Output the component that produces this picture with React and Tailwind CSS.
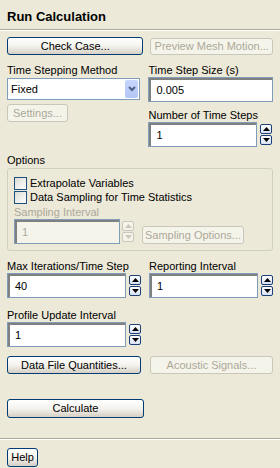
import React from 'react';

const font = "font-['Liberation_Sans',Arial,sans-serif]";

const Button = ({ children, disabled, className = '' }) => (
  <button
    type="button"
    disabled={disabled}
    className={`flex items-center justify-center rounded-[3px] border text-[11px] leading-none ${
      disabled
        ? 'border-[#C9C7BA] bg-[#F5F4EA] text-[#ACA899]'
        : 'border-[#003C74] bg-gradient-to-b from-white via-[#F4F3EE] to-[#D6D0C5] text-black'
    } ${className}`}
  >
    {children}
  </button>
);

const Spin = ({ disabled }) => {
  const box = disabled
    ? 'border-[#C9C7BA] bg-[#F5F4EA]'
    : 'border-[#1C3F7A] bg-gradient-to-b from-white to-[#D8E2F5]';
  const fill = disabled ? '#C9C7BA' : '#000';
  return (
    <div className="flex flex-col gap-[1px]">
      <div className={`flex h-[10px] w-[12px] items-center justify-center rounded-[2px] border ${box}`}>
        <svg width="7" height="4" viewBox="0 0 7 4"><path d="M0 4 L3.5 0 L7 4 Z" fill={fill} /></svg>
      </div>
      <div className={`flex h-[10px] w-[12px] items-center justify-center rounded-[2px] border ${box}`}>
        <svg width="7" height="4" viewBox="0 0 7 4"><path d="M0 0 L3.5 4 L7 0 Z" fill={fill} /></svg>
      </div>
    </div>
  );
};

const Field = ({ value, disabled, className = '' }) => (
  <div
    className={`flex h-[25px] items-center border border-[#7F9DB9] ${disabled ? 'bg-[#F5F4EA] text-[#ACA899]' : 'bg-white text-black'} ${className}`}
  >
    <div className="flex h-full w-full items-center border-l-2 border-t-2 border-[#808080] pl-[5px] text-[11px]">
      {value}
    </div>
  </div>
);

const Label = ({ children, className = '' }) => (
  <div className={`h-[14px] text-[11px] leading-[14px] ${className}`}>{children}</div>
);

const Check = ({ label }) => (
  <div className="flex h-[14px] items-center gap-[3px]">
    <div className="h-[13px] w-[13px] border border-[#1C5180] bg-gradient-to-br from-[#DCDBD5] to-white" />
    <span className="text-[11px] leading-none">{label}</span>
  </div>
);

const App = () => {
  return (
    <div className={`h-[468px] w-[280px] overflow-hidden bg-[#ECE9D8] text-black ${font}`}>
      <div className="h-[29px] px-[7px] pt-[9px] text-[13px] font-bold leading-[16px]">Run Calculation</div>
      <div className="border-t border-b border-t-[#ACA899] border-b-white" />

      <div className="px-[7px]">
        <div className="mt-[6px] flex gap-[7px]">
          <Button className="h-[18px] w-[137px]">Check Case...</Button>
          <Button disabled className="mt-[1px] h-[17px] w-[123px]">Preview Mesh Motion...</Button>
        </div>

        <div className="mt-[8px] flex gap-[8px]">
          <div className="w-[134px]">
            <Label>Time Stepping Method</Label>
            <div className="mt-[1px] flex h-[22px] items-center border border-[#7F9DB9] bg-white pl-[3px] pr-[1px]">
              <span className="flex-1 text-[11px]">Fixed</span>
              <div className="flex h-[18px] w-[13px] items-center justify-center rounded-[2px] bg-gradient-to-b from-[#C6D5FC] to-[#B2C7F7]">
                <svg width="8" height="6" viewBox="0 0 8 6"><path d="M1 1 L4 4 L7 1" stroke="#4D6185" strokeWidth="2" fill="none" /></svg>
              </div>
            </div>
            <Button disabled className="mt-[4px] h-[18px] w-[61px]">Settings...</Button>
          </div>
          <div className="w-[125px]">
            <Label>Time Step Size (s)</Label>
            <Field value="0.005" className="mt-[0px]" />
            <Label className="mt-[6px]">Number of Time Steps</Label>
            <div className="flex items-center gap-[3px]">
              <Field value="1" className="w-[109px]" />
              <Spin />
            </div>
          </div>
        </div>

        <Label className="mt-[6px]">Options</Label>
        <div className="mt-[1px] h-[83px] rounded-[3px] border border-[#D0D0BF] px-[6px] pt-[7px]">
          <Check label="Extrapolate Variables" />
          <div className="mt-[0px]"><Check label="Data Sampling for Time Statistics" /></div>
          <Label className="mt-[1px] text-[#ACA899]">Sampling Interval</Label>
          <div className="flex items-end gap-[8px]">
            <div className="flex items-center gap-[2px]">
              <Field value="1" disabled className="w-[106px]" />
              <Spin disabled />
            </div>
            <Button disabled className="h-[18px] w-[102px]">Sampling Options...</Button>
          </div>
        </div>

        <div className="mt-[8px] flex gap-[8px]">
          <div className="w-[134px]">
            <Label>Max Iterations/Time Step</Label>
            <div className="flex items-center gap-[3px]">
              <Field value="40" className="w-[119px]" />
              <Spin />
            </div>
            <Label className="mt-[10px]">Profile Update Interval</Label>
            <div className="flex items-center gap-[3px]">
              <Field value="1" className="w-[119px]" />
              <Spin />
            </div>
          </div>
          <div className="w-[125px]">
            <Label>Reporting Interval</Label>
            <div className="flex items-center gap-[3px]">
              <Field value="1" className="w-[109px]" />
              <Spin />
            </div>
          </div>
        </div>

        <div className="mt-[9px] flex gap-[9px]">
          <Button className="h-[18px] w-[134px]">Data File Quantities...</Button>
          <Button disabled className="h-[18px] w-[123px]">Acoustic Signals...</Button>
        </div>

        <Button className="mt-[25px] h-[19px] w-[137px]">Calculate</Button>
      </div>

      <div className="mt-[20px] border-t border-b border-t-[#ACA899] border-b-white" />
      <div className="px-[7px] pt-[8px]">
        <Button className="h-[19px] w-[31px]">Help</Button>
      </div>
    </div>
  );
};

export default App;
